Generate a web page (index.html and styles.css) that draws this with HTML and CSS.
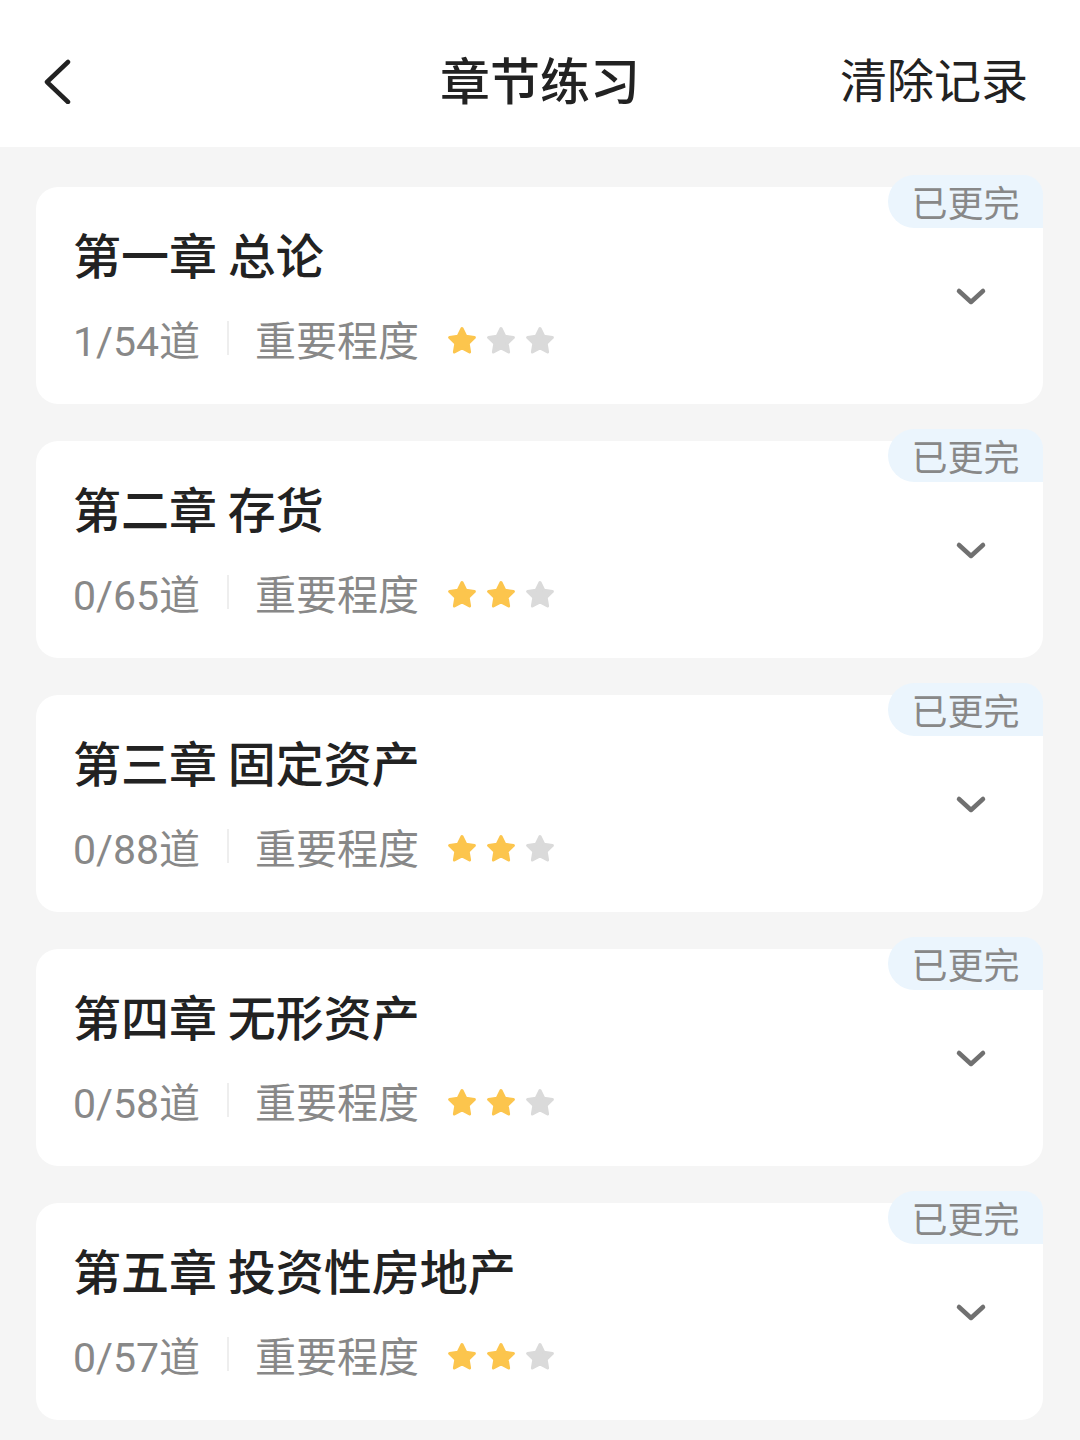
FILE: index.html
```html
<!DOCTYPE html>
<html lang="zh-CN">
<head>
    <meta charset="UTF-8">
    <meta name="viewport" content="width=device-width, initial-scale=1.0">
    <title>章节练习</title>
    <link rel="stylesheet" href="styles.css">
</head>
<body>
    <div class="header">
        <span class="back">
            <svg width="40" height="50" viewBox="0 0 40 50"><path d="M33 8 L12 28 L33 48" fill="none" stroke="#222" stroke-width="4.5" stroke-linecap="round" stroke-linejoin="round"/></svg>
        </span>
        <h1>章节练习</h1>
        <span class="clear">清除记录</span>
    </div>

    <div class="list">
        <div class="card">
            <span class="badge">已更完</span>
            <div class="info">
                <div class="title">第一章 总论</div>
                <div class="meta">
                    <span class="count">1/54道</span>
                    <span class="divider"></span>
                    <span class="level">重要程度</span>
                    <span class="stars">
                        <svg class="star on" viewBox="0 0 30 29"><path d="M15 2.5L18.8 10.2 27.4 11.5 21.2 17.5 22.6 26 15 22 7.4 26 8.8 17.5 2.6 11.5 11.2 10.2Z"/></svg>
                        <svg class="star" viewBox="0 0 30 29"><path d="M15 2.5L18.8 10.2 27.4 11.5 21.2 17.5 22.6 26 15 22 7.4 26 8.8 17.5 2.6 11.5 11.2 10.2Z"/></svg>
                        <svg class="star" viewBox="0 0 30 29"><path d="M15 2.5L18.8 10.2 27.4 11.5 21.2 17.5 22.6 26 15 22 7.4 26 8.8 17.5 2.6 11.5 11.2 10.2Z"/></svg>
                    </span>
                </div>
            </div>
            <svg class="arrow" viewBox="0 0 32 20"><path d="M4 4 L16 15 L28 4" fill="none" stroke="#707070" stroke-width="4.5" stroke-linecap="round" stroke-linejoin="round"/></svg>
        </div>

        <div class="card">
            <span class="badge">已更完</span>
            <div class="info">
                <div class="title">第二章 存货</div>
                <div class="meta">
                    <span class="count">0/65道</span>
                    <span class="divider"></span>
                    <span class="level">重要程度</span>
                    <span class="stars">
                        <svg class="star on" viewBox="0 0 30 29"><path d="M15 2.5L18.8 10.2 27.4 11.5 21.2 17.5 22.6 26 15 22 7.4 26 8.8 17.5 2.6 11.5 11.2 10.2Z"/></svg>
                        <svg class="star on" viewBox="0 0 30 29"><path d="M15 2.5L18.8 10.2 27.4 11.5 21.2 17.5 22.6 26 15 22 7.4 26 8.8 17.5 2.6 11.5 11.2 10.2Z"/></svg>
                        <svg class="star" viewBox="0 0 30 29"><path d="M15 2.5L18.8 10.2 27.4 11.5 21.2 17.5 22.6 26 15 22 7.4 26 8.8 17.5 2.6 11.5 11.2 10.2Z"/></svg>
                    </span>
                </div>
            </div>
            <svg class="arrow" viewBox="0 0 32 20"><path d="M4 4 L16 15 L28 4" fill="none" stroke="#707070" stroke-width="4.5" stroke-linecap="round" stroke-linejoin="round"/></svg>
        </div>

        <div class="card">
            <span class="badge">已更完</span>
            <div class="info">
                <div class="title">第三章 固定资产</div>
                <div class="meta">
                    <span class="count">0/88道</span>
                    <span class="divider"></span>
                    <span class="level">重要程度</span>
                    <span class="stars">
                        <svg class="star on" viewBox="0 0 30 29"><path d="M15 2.5L18.8 10.2 27.4 11.5 21.2 17.5 22.6 26 15 22 7.4 26 8.8 17.5 2.6 11.5 11.2 10.2Z"/></svg>
                        <svg class="star on" viewBox="0 0 30 29"><path d="M15 2.5L18.8 10.2 27.4 11.5 21.2 17.5 22.6 26 15 22 7.4 26 8.8 17.5 2.6 11.5 11.2 10.2Z"/></svg>
                        <svg class="star" viewBox="0 0 30 29"><path d="M15 2.5L18.8 10.2 27.4 11.5 21.2 17.5 22.6 26 15 22 7.4 26 8.8 17.5 2.6 11.5 11.2 10.2Z"/></svg>
                    </span>
                </div>
            </div>
            <svg class="arrow" viewBox="0 0 32 20"><path d="M4 4 L16 15 L28 4" fill="none" stroke="#707070" stroke-width="4.5" stroke-linecap="round" stroke-linejoin="round"/></svg>
        </div>

        <div class="card">
            <span class="badge">已更完</span>
            <div class="info">
                <div class="title">第四章 无形资产</div>
                <div class="meta">
                    <span class="count">0/58道</span>
                    <span class="divider"></span>
                    <span class="level">重要程度</span>
                    <span class="stars">
                        <svg class="star on" viewBox="0 0 30 29"><path d="M15 2.5L18.8 10.2 27.4 11.5 21.2 17.5 22.6 26 15 22 7.4 26 8.8 17.5 2.6 11.5 11.2 10.2Z"/></svg>
                        <svg class="star on" viewBox="0 0 30 29"><path d="M15 2.5L18.8 10.2 27.4 11.5 21.2 17.5 22.6 26 15 22 7.4 26 8.8 17.5 2.6 11.5 11.2 10.2Z"/></svg>
                        <svg class="star" viewBox="0 0 30 29"><path d="M15 2.5L18.8 10.2 27.4 11.5 21.2 17.5 22.6 26 15 22 7.4 26 8.8 17.5 2.6 11.5 11.2 10.2Z"/></svg>
                    </span>
                </div>
            </div>
            <svg class="arrow" viewBox="0 0 32 20"><path d="M4 4 L16 15 L28 4" fill="none" stroke="#707070" stroke-width="4.5" stroke-linecap="round" stroke-linejoin="round"/></svg>
        </div>

        <div class="card">
            <span class="badge">已更完</span>
            <div class="info">
                <div class="title">第五章 投资性房地产</div>
                <div class="meta">
                    <span class="count">0/57道</span>
                    <span class="divider"></span>
                    <span class="level">重要程度</span>
                    <span class="stars">
                        <svg class="star on" viewBox="0 0 30 29"><path d="M15 2.5L18.8 10.2 27.4 11.5 21.2 17.5 22.6 26 15 22 7.4 26 8.8 17.5 2.6 11.5 11.2 10.2Z"/></svg>
                        <svg class="star on" viewBox="0 0 30 29"><path d="M15 2.5L18.8 10.2 27.4 11.5 21.2 17.5 22.6 26 15 22 7.4 26 8.8 17.5 2.6 11.5 11.2 10.2Z"/></svg>
                        <svg class="star" viewBox="0 0 30 29"><path d="M15 2.5L18.8 10.2 27.4 11.5 21.2 17.5 22.6 26 15 22 7.4 26 8.8 17.5 2.6 11.5 11.2 10.2Z"/></svg>
                    </span>
                </div>
            </div>
            <svg class="arrow" viewBox="0 0 32 20"><path d="M4 4 L16 15 L28 4" fill="none" stroke="#707070" stroke-width="4.5" stroke-linecap="round" stroke-linejoin="round"/></svg>
        </div>
    </div>
</body>
</html>
```

FILE: styles.css
```css
body {
    margin: 0;
    font-family: "Noto Sans CJK SC", "Noto Sans", sans-serif;
    background: #f5f5f5;
    color: #222;
}

/* top bar: back / title / clear */
.header {
    height: 147px;
    background: #fff;
    display: grid;
    grid-template-columns: 1fr auto 1fr;
    align-items: center;
    padding: 0 52px;
}

.back {
    display: flex;
    width: 40px;
    height: 50px;
    margin: 10px 0 0 -17px;
}

.header h1 {
    margin: 0;
    font-size: 50px;
    font-weight: 500;
    color: #222;
    margin-top: 8px;
}

.clear {
    justify-self: end;
    font-size: 47px;
    color: #222;
    margin-top: 8px;
}

.list {
    padding: 40px 37px 20px 36px;
    display: flex;
    flex-direction: column;
    gap: 37px;
}

.card {
    position: relative;
    height: 217px;
    background: #fff;
    border-radius: 22px;
    display: flex;
    align-items: center;
    padding: 0 56px 0 37px;
}

.info {
    flex: 1;
    margin-top: -6px;
}

.title {
    font-size: 48px;
    font-weight: 500;
    line-height: 60px;
    color: #222;
}

.meta {
    display: flex;
    align-items: center;
    margin-top: 30px;
    height: 50px;
}

.count,
.level {
    font-family: Roboto, "Noto Sans CJK SC", sans-serif;
    font-size: 41px;
    color: #888;
}

.divider {
    width: 2px;
    height: 34px;
    background: #eee;
    margin: 0 26px 0 27px;
}

.stars {
    display: flex;
    gap: 9px;
    margin: 5px 0 0 28px;
}

.star {
    width: 30px;
    height: 29px;
    fill: #dadada;
    stroke: #dadada;
    stroke-width: 3;
    stroke-linejoin: round;
}

.star.on {
    fill: #fcc54d;
    stroke: #fcc54d;
}

.arrow {
    width: 32px;
    height: 20px;
    margin-top: 3px;
}

.badge {
    position: absolute;
    top: -12px;
    right: 0;
    width: 155px;
    height: 53px;
    line-height: 53px;
    text-align: center;
    background: #ebf5fd;
    border-radius: 27px 20px 0 27px;
    font-size: 36px;
    color: #888;
}
```
